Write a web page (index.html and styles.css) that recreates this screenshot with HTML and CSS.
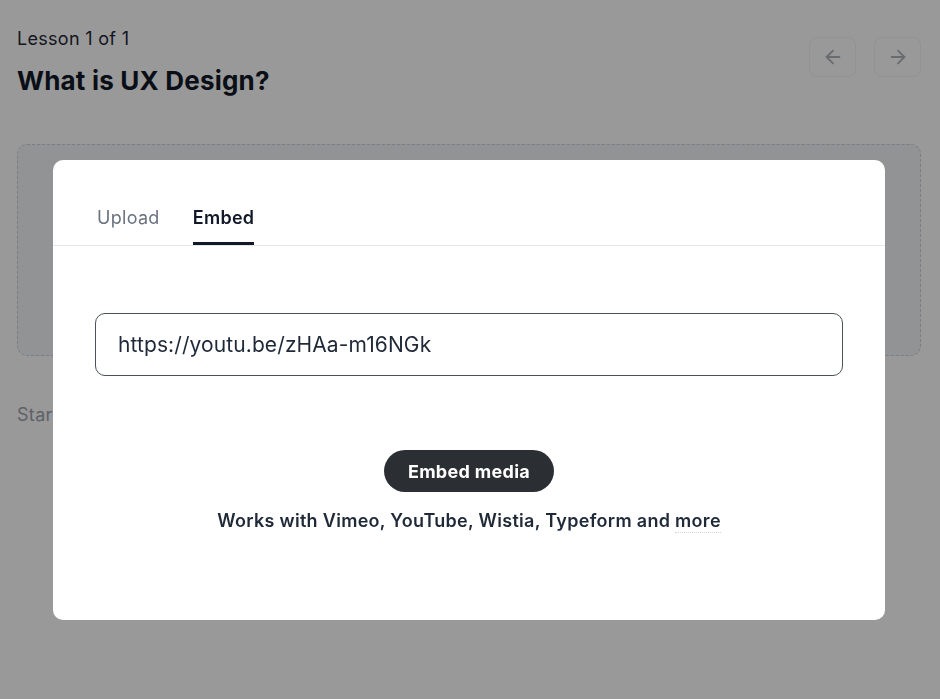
FILE: index.html
```html
<!DOCTYPE html>
<html>
<head>
<meta charset="utf-8">
<link rel="stylesheet" href="styles.css">
</head>
<body>
<div class="page">
  <div class="header">
    <div class="heading">
      <div class="lesson">Lesson 1 of 1</div>
      <h1 class="title">What is UX Design?</h1>
    </div>
    <div class="nav">
      <button class="navbtn" aria-label="Previous">
        <svg width="22" height="22" viewBox="0 0 24 24" fill="none" stroke="currentColor" stroke-width="2" stroke-linecap="round" stroke-linejoin="round"><path d="M19 12H5"/><path d="M12 19l-7-7 7-7"/></svg>
      </button>
      <button class="navbtn" aria-label="Next">
        <svg width="22" height="22" viewBox="0 0 24 24" fill="none" stroke="currentColor" stroke-width="2" stroke-linecap="round" stroke-linejoin="round"><path d="M5 12h14"/><path d="M12 5l7 7-7 7"/></svg>
      </button>
    </div>
  </div>
  <div class="dropzone"></div>
  <p class="start">Start writing your lesson content here...</p>
</div>

<div class="overlay">
  <div class="modal">
    <div class="tabs">
      <div class="tab">Upload</div>
      <div class="tab active">Embed</div>
    </div>
    <div class="body">
      <div class="input">https://youtu.be/zHAa-m16NGk</div>
      <button class="embedbtn">Embed media</button>
      <p class="works">Works with Vimeo, YouTube, Wistia, Typeform and <span class="more">more</span></p>
    </div>
  </div>
</div>
</body>
</html>
```

FILE: styles.css
```css
* { box-sizing: border-box; }
html, body { margin: 0; padding: 0; }
body {
  background: #ffffff;
  font-family: Inter, "Noto Sans", sans-serif;
  color: #111827;
  width: 940px;
  height: 699px;
  overflow: hidden;
}
.page {
  padding: 27px 19px 0 17px;
}
.header {
  display: flex;
  justify-content: space-between;
  align-items: flex-start;
}
.lesson {
  font-size: 18px;
  line-height: 24px;
  letter-spacing: 0.3px;
  color: #1f2937;
}
.title {
  margin: 14px 0 0;
  font-size: 26px;
  line-height: 32px;
  font-weight: 700;
  letter-spacing: 0.2px;
  color: #111827;
}
.nav {
  display: flex;
  gap: 18px;
  padding-top: 10px;
}
.navbtn {
  width: 47px;
  height: 40px;
  border: 1px solid #f3f4f6;
  border-radius: 8px;
  background: #ffffff;
  color: #b0b4ba;
  display: flex;
  align-items: center;
  justify-content: center;
  padding: 0;
}
.dropzone {
  margin-top: 47px;
  height: 212px;
  border: 1px dashed #cbd0d8;
  border-radius: 10px;
  background: #f4f5f7;
}
.start {
  margin: 48px 0 0;
  font-size: 18px;
  letter-spacing: 0.3px;
  color: #9ca3af;
}
.overlay {
  position: fixed;
  inset: 0;
  background: rgba(0, 0, 0, 0.4);
  padding-top: 160px;
}
.modal {
  width: 832px;
  height: 460px;
  margin-left: 53px;
  background: #ffffff;
  border-radius: 10px;
  overflow: hidden;
}
.tabs {
  display: flex;
  gap: 33px;
  padding: 0 0 0 44px;
  height: 86px;
  align-items: flex-end;
  border-bottom: 1px solid #e5e7eb;
}
.tab {
  font-size: 18px;
  line-height: 24px;
  letter-spacing: 0.3px;
  padding-bottom: 12px;
  border-bottom: 3px solid transparent;
  color: #6b7280;
}
.tab.active {
  color: #111827;
  font-weight: 600;
  border-bottom-color: #111827;
}
.body {
  padding: 67px 42px 0;
  display: flex;
  flex-direction: column;
  align-items: center;
}
.input {
  width: 100%;
  height: 63px;
  border: 1px solid #4b5059;
  border-radius: 10px;
  padding: 0 22px;
  display: flex;
  align-items: center;
  font-size: 21px;
  letter-spacing: 0.1px;
  color: #1f2937;
}
.embedbtn {
  margin-top: 74px;
  height: 42px;
  padding: 0 24px;
  border: none;
  border-radius: 21px;
  background: #2b2e33;
  color: #ffffff;
  font-family: Inter, "Noto Sans", sans-serif;
  font-size: 18px;
  font-weight: 700;
  letter-spacing: 0.3px;
}
.works {
  margin: 17px 0 0;
  font-size: 18px;
  line-height: 24px;
  font-weight: 600;
  letter-spacing: 0.3px;
  color: #1f2937;
}
.more {
  border-bottom: 1px dotted #d1d5db;
  padding-bottom: 1px;
}
```
